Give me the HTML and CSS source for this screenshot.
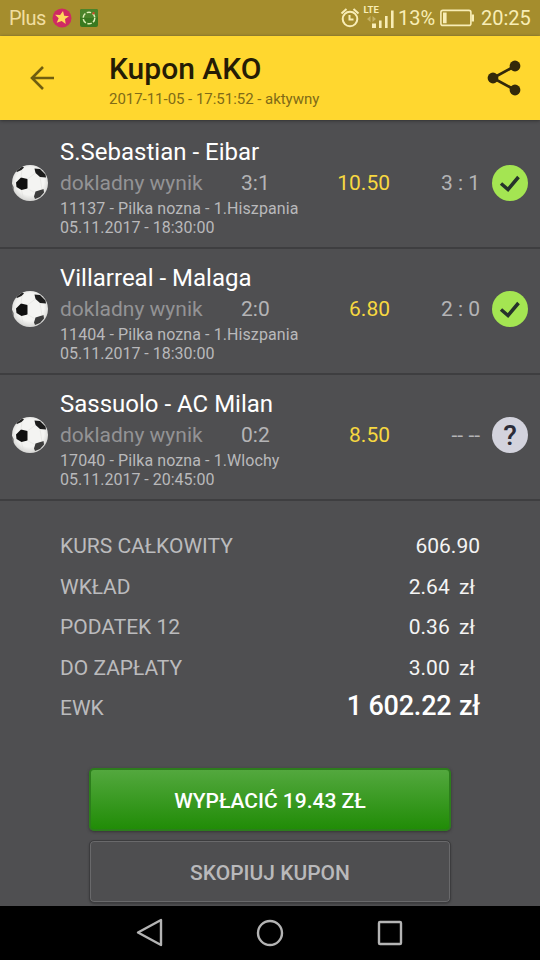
FILE: index.html
```html
<!DOCTYPE html>
<html lang="pl">
<head>
<meta charset="utf-8">
<title>Kupon AKO</title>
<link rel="stylesheet" href="styles.css">
</head>
<body>
<svg width="0" height="0" class="defs" aria-hidden="true">
  <defs>
    <radialGradient id="shade" cx="0.5" cy="0.45" r="0.55">
      <stop offset="0.7" stop-color="#f4f4f2"/><stop offset="1" stop-color="#d4d4d2"/>
    </radialGradient>
    <clipPath id="round"><circle cx="18" cy="18" r="18"/></clipPath>
    <symbol id="ball" viewBox="0 0 36 36">
      <circle cx="18" cy="18" r="18" fill="url(#shade)"/>
      <g clip-path="url(#round)">
        <path d="M4 17.500 9 12.500l6.500 1.500v9.500l-6 1.500-5-3z" fill="#101010"/>
        <path d="M22.500 3.500 28 4l5.500 5.500.5 3-6-.500-4.500-4z" fill="#1c1c1c"/>
        <path d="M22 31.500l1.500-5L31.500 24l.5 3.500-4 4.500-5 2z" fill="#3c3c3c"/>
        <path d="M4 6 10 1l2 1.500-2.500 2.500L5 7z" fill="#222"/>
        <path d="M0 19l1.500 3v5l-2-2z" fill="#444"/>
        <path d="M9 12.500l1-7.500M15.500 14l8-6M15.500 23.500l7 4M9.500 25l2 9M28 12l2 12.500" fill="none" stroke="#e0e0de" stroke-width=".6"/>
      </g>
    </symbol>
    <symbol id="won" viewBox="0 0 36 36">
      <circle cx="18" cy="18" r="18" fill="#a4e552"/>
      <path d="M9 18.500l7 6 10.500-12.500" fill="none" stroke="#26332b" stroke-width="3.500"/>
    </symbol>
  </defs>
</svg>
<div class="screen">
  <div class="status">
    <span class="carrier">Plus</span>
    <svg class="star" width="20" height="20" viewBox="0 0 20 20"><circle cx="10" cy="10" r="9.500" fill="#cf2a63"/><path d="M11 3l1.200 4.700 4.800.6-4 2.800.7 5-4-3-5 1.700 2-4.600-3.600-3.500 5 .4z" fill="#ffd95a"/></svg>
    <svg class="app" width="18" height="18" viewBox="0 0 18 18"><rect width="18" height="18" rx="2" fill="#39791f"/><rect width="18" height="9" rx="2" fill="#4b842a"/><circle cx="9" cy="9" r="5.800" fill="none" stroke="#dff0b8" stroke-width="1.500" stroke-dasharray="4.500 1.570"/><path d="M12.500 5l2-1.500" stroke="#cc4b2c" stroke-width="2"/></svg>
    <svg class="radio" width="56" height="26" viewBox="0 0 56 26">
      <g fill="none" stroke="#f8edb6" stroke-width="2">
        <circle cx="11" cy="16" r="7.300"/><path d="M10.500 12v4.500h4M2.500 10.500l5-4.500M19.500 10.500l-5-4.500"/>
      </g>
      <text x="24.500" y="10" class="lte">LTE</text>
      <path d="M28 16l3.500-3v6zM37 16l-3.500-3v6z" fill="#c5b265"/>
      <path d="M33 20.500h4v4.500h-4zM40 17.500h2.600V25H40zM46 13h2.600v12H46zM52 7.500h2.600V25H52z" fill="#f8edb6"/>
    </svg>
    <span class="percent">13%</span>
    <svg class="battery" width="34" height="18" viewBox="0 0 34 18"><rect x=".9" y="1.400" width="30" height="15" rx="2" fill="none" stroke="#f8edb6" stroke-width="1.600"/><path d="M3 3.500h3.600v10.800H3zM31.500 5.500H34v7h-2.500z" fill="#f8edb6"/></svg>
    <span class="clock">20:25</span>
  </div>
  <header class="header">
    <svg class="back" width="26" height="26" viewBox="0 0 26 26"><path d="M25 13H3M14 2 3 13l11 11" fill="none" stroke="#705e10" stroke-width="2.600"/></svg>
    <div class="heading"><h1>Kupon AKO</h1><p>2017-11-05 - 17:51:52 - aktywny</p></div>
    <svg class="share" width="34" height="36" viewBox="0 0 34 36"><path d="M28 6 6 18l22 12" fill="none" stroke="#33290a" stroke-width="2.800"/><g fill="#33290a"><circle cx="28" cy="6" r="5.400"/><circle cx="6" cy="18" r="5.400"/><circle cx="28" cy="30" r="5.400"/></g></svg>
  </header>
  <main>
    <section class="bet">
      <svg class="mark"><use href="#ball"/></svg>
      <div class="info">
        <h2>S.Sebastian - Eibar</h2>
        <div class="line"><span class="market">dokladny wynik</span><span class="pick">3:1</span><span class="odds">10.50</span><span class="score">3 : 1</span></div>
        <p class="league">11137 - Pilka nozna - 1.Hiszpania</p><p>05.11.2017 - 18:30:00</p>
      </div>
      <svg class="mark"><use href="#won"/></svg>
    </section>
    <section class="bet">
      <svg class="mark"><use href="#ball"/></svg>
      <div class="info">
        <h2>Villarreal - Malaga</h2>
        <div class="line"><span class="market">dokladny wynik</span><span class="pick">2:0</span><span class="odds">6.80</span><span class="score">2 : 0</span></div>
        <p class="league">11404 - Pilka nozna - 1.Hiszpania</p><p>05.11.2017 - 18:30:00</p>
      </div>
      <svg class="mark"><use href="#won"/></svg>
    </section>
    <section class="bet">
      <svg class="mark"><use href="#ball"/></svg>
      <div class="info">
        <h2>Sassuolo - AC Milan</h2>
        <div class="line"><span class="market">dokladny wynik</span><span class="pick">0:2</span><span class="odds">8.50</span><span class="score">-- --</span></div>
        <p class="league">17040 - Pilka nozna - 1.Wlochy</p><p>05.11.2017 - 20:45:00</p>
      </div>
      <span class="mark open">?</span>
    </section>
    <dl class="totals">
      <div><dt>KURS CAŁKOWITY</dt><dd>606.90</dd></div>
      <div><dt>WKŁAD</dt><dd class="money">2.64 <span>zł</span></dd></div>
      <div><dt>PODATEK 12</dt><dd class="money">0.36 <span>zł</span></dd></div>
      <div><dt>DO ZAPŁATY</dt><dd class="money">3.00 <span>zł</span></dd></div>
      <div><dt>EWK</dt><dd class="payout">1 602.22 <span>zł</span></dd></div>
    </dl>
    <div class="actions">
      <button class="cash">WYPŁACIĆ 19.43 ZŁ</button>
      <button class="copy">SKOPIUJ KUPON</button>
    </div>
  </main>
  <nav class="nav">
    <svg width="30" height="30" viewBox="0 0 30 30"><path d="M26 2v25L3 14.500z"/></svg>
    <svg width="30" height="30" viewBox="0 0 30 30"><circle cx="15" cy="15" r="12"/></svg>
    <svg width="30" height="30" viewBox="0 0 30 30"><rect x="4" y="4" width="22" height="22" rx="1"/></svg>
  </nav>
</div>
</body>
</html>
```

FILE: styles.css
```css
* { box-sizing: border-box; }
body, h1, h2, p, dl, dd { margin: 0; }
body { font-family: Roboto, "Liberation Sans", sans-serif; background: #4f4f51; }
.defs { position: absolute; }
.screen { width: 540px; height: 960px; display: flex; flex-direction: column; overflow: hidden; }

.status { height: 36px; background: #a58d2d; color: #f8edb6; display: flex; align-items: center; padding: 0 9px 0 9px; flex: none; font-size: 20px; line-height: 38px; white-space: nowrap; }
.carrier { width: 43px; color: #f1dea0; line-height: 36px; letter-spacing: -.5px; }
.app { margin-left: 8px; }
.radio { margin-left: auto; margin-top: -4px; }
.lte { font: bold 9.500px Roboto, sans-serif; fill: #f8edb6; }
.percent { width: 37px; margin-left: 3px; }
.battery { margin-left: 5px; }
.clock { width: 50px; margin-left: 7px; }

.header { height: 84px; background: #ffd72f; display: flex; flex: none; padding: 0 19px 0 29px; align-items: center; box-shadow: 0 1px 3px #333; position: relative; }
.heading { margin-left: 54px; flex: 1; height: 84px; padding-top: 15px; white-space: nowrap; }
h1 { font-size: 30px; font-weight: 500; line-height: 36px; color: #251c05; }
.heading p { font-size: 15px; line-height: 24px; color: #806b17; letter-spacing: -.03px; }

main { flex: 1; display: flex; flex-direction: column; padding-top: 3px; }
.bet { height: 126px; border-bottom: 2px solid #3e3e40; display: flex; padding: 15px 12px 0; flex: none; }
.mark { width: 36px; height: 36px; margin-top: 27px; flex: none; }
.info { width: 420px; margin: 0 12px; white-space: nowrap; }
h2 { color: #fff; font-size: 24px; font-weight: 400; line-height: 28px; }
.line { display: grid; grid-template-columns: 180px 70px 80px 90px; font-size: 21px; line-height: 28px; margin-bottom: 3px; margin-top: 3px; }
.market { color: #939395; }
.pick, .score { color: #b4b4b6; }
.pick { padding-left: 1px; }
.odds { color: #f7d840; text-align: right; }
.score { text-align: right; }
.info p { color: #b9b9bb; font-size: 16px; line-height: 18.500px; }
.info .league { letter-spacing: .09px; }
.open { border-radius: 50%; background: #d3d3dd; color: #2c2c38; font-size: 28px; font-weight: 500; line-height: 37px; text-align: center; }

.totals { padding: 25px 60px 0; font-size: 21px; }
.totals div { display: flex; justify-content: space-between; height: 40.500px; line-height: 40.500px; white-space: nowrap; }
dt { color: #bbbbbd; }
dd { color: #f4f4f4; }
.money { padding-right: 5px; }
.money span { margin-left: 4px; }
dd.payout { font-size: 27px; font-weight: 500; line-height: 37px; color: #fff; }
.payout span { margin-left: 1px; }
.payout { letter-spacing: -.2px; }

.actions { display: flex; flex-direction: column; gap: 9px; padding: 0 89px; margin-top: auto; margin-bottom: 3px; }
button { height: 63px; border-radius: 5px; font-family: inherit; font-size: 21px; font-weight: 500; padding: 2px 0 0; }
.cash { color: #fff; background: linear-gradient(#53a83e, #218c07); border: 2px solid #2c7d1c; box-shadow: 0 1px 3px #333; }
.copy { color: #b9b9bb; background: #4e4e50; border: 1px solid #3c3c3e; box-shadow: inset 0 0 0 1px #69696b, 0 1px 2px #3c3c3e; }

.nav { height: 54px; background: #000; flex: none; display: flex; justify-content: center; gap: 90px; padding-top: 12px; }
.nav svg { fill: none; stroke: #b4b4b4; stroke-width: 2.400; stroke-linejoin: round; }
```
